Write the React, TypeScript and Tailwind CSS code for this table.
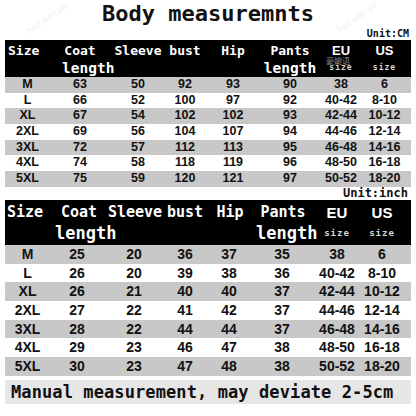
const cmRows = [
  ["M", "63", "50", "92", "93", "90", "38", "6"],
  ["L", "66", "52", "100", "97", "92", "40-42", "8-10"],
  ["XL", "67", "54", "102", "102", "93", "42-44", "10-12"],
  ["2XL", "69", "56", "104", "107", "94", "44-46", "12-14"],
  ["3XL", "72", "57", "112", "113", "95", "46-48", "14-16"],
  ["4XL", "74", "58", "118", "119", "96", "48-50", "16-18"],
  ["5XL", "75", "59", "120", "121", "97", "50-52", "18-20"],
];

const inchRows = [
  ["M", "25", "20", "36", "37", "35", "38", "6"],
  ["L", "26", "20", "39", "38", "36", "40-42", "8-10"],
  ["XL", "26", "21", "40", "40", "37", "42-44", "10-12"],
  ["2XL", "27", "22", "41", "42", "37", "44-46", "12-14"],
  ["3XL", "28", "22", "44", "44", "37", "46-48", "14-16"],
  ["4XL", "29", "23", "46", "47", "38", "48-50", "16-18"],
  ["5XL", "30", "23", "47", "48", "38", "50-52", "18-20"],
];

// faint watermarks, only where they don't sit on text
const marks = [
  { left: 24, top: 12 },
  { left: 334, top: 11 },
];

const mono = "font-['DejaVu_Sans_Mono',monospace] font-bold";
const sans = "font-['Liberation_Sans',Arial,sans-serif] font-bold";
const narrow = "font-['Liberation_Sans_Narrow','Liberation_Sans',Arial,sans-serif] font-bold";

function HeaderTop() {
  return (
    <div className="bg-black pt-[2px] text-white">
      <div className={`grid h-[17px] grid-cols-[45px_60px_56px_38px_58px_56px_46px_41px] text-[13px] leading-[17px] ${mono}`}>
        <span className="pl-[3px]">Size</span>
        <span className="text-center">Coat</span>
        <span className="text-center">Sleeve</span>
        <span className="text-center">bust</span>
        <span className="text-center">Hip</span>
        <span className="text-center">Pants</span>
        <span className={`text-center ${narrow}`}>EU</span>
        <span className={`text-center ${narrow}`}>US</span>
      </div>
      <div className="grid h-[18px] grid-cols-[45px_60px_56px_38px_58px_56px_46px_41px] leading-[18px]">
        <span />
        <span className={`pl-[12px] text-center text-[14.5px] ${mono}`}>length</span>
        <span />
        <span />
        <span />
        <span className={`text-center text-[14.5px] ${mono}`}>length</span>
        <span className={`text-center text-[8px] tracking-[1px] text-[#d8d8d8] ${mono}`}>size</span>
        <span className={`text-center text-[8px] tracking-[1px] text-[#d8d8d8] ${mono}`}>size</span>
      </div>
    </div>
  );
}

function HeaderBottom() {
  return (
    <div className="bg-black pt-[3px] text-white">
      <div className={`grid h-[19px] grid-cols-[45px_54px_60px_42px_46px_60px_50px_40px] text-[15px] leading-[19px] ${mono}`}>
        <span className="pl-[2px]">Size</span>
        <span className="pl-[4px] text-center">Coat</span>
        <span className="pl-[2px] text-center">Sleeve</span>
        <span className="text-center">bust</span>
        <span className="pl-[2px] text-center">Hip</span>
        <span className="pl-[2px] text-center">Pants</span>
        <span className={`text-center text-[15px] ${narrow}`}>EU</span>
        <span className={`text-center text-[15px] ${narrow}`}>US</span>
      </div>
      <div className="grid h-[23px] grid-cols-[45px_54px_60px_42px_46px_60px_50px_40px] leading-[23px]">
        <span />
        <span className={`whitespace-nowrap pl-[5px] text-[17px] ${mono}`}>length</span>
        <span />
        <span />
        <span />
        <span className={`pl-[4px] text-center text-[17px] ${mono}`}>length</span>
        <span className={`text-center text-[9px] tracking-[1px] text-[#d8d8d8] ${mono}`}>size</span>
        <span className={`text-center text-[9px] tracking-[1px] text-[#d8d8d8] ${mono}`}>size</span>
      </div>
    </div>
  );
}

export default function App() {
  return (
    <div className="relative h-[416px] w-[416px] overflow-hidden bg-white text-[#111]">
      <div className="px-[5px]">
        {/* Title */}
        <h1 className={`h-[28px] text-center text-[22px] leading-[28px] ${mono}`}>Body measuremnts</h1>
        <div className={`h-[12px] pr-[2px] text-right text-[10px] leading-[12px] ${mono}`}>Unit:CM</div>

        {/* cm table */}
        <HeaderTop />
        {cmRows.map((row, i) => (
          <div
            key={row[0]}
            className={`grid h-[15.7px] grid-cols-[45px_60px_56px_38px_58px_56px_46px_41px] items-center text-center text-[12.5px] leading-[15.7px] ${sans} ${i % 2 === 0 ? "bg-[#c8c8c8]" : "bg-white"}`}
          >
            {row.map((cell, j) => (
              <span key={j}>{cell}</span>
            ))}
          </div>
        ))}

        <div className={`h-[13px] pr-[3px] text-right text-[12px] leading-[13px] ${mono}`}>Unit:inch</div>

        {/* inch table */}
        <HeaderBottom />
        {inchRows.map((row, i) => (
          <div
            key={row[0]}
            className={`grid h-[18.7px] grid-cols-[45px_54px_60px_42px_46px_60px_50px_40px] items-center text-center text-[14px] leading-[18.7px] ${sans} ${i % 2 === 0 ? "bg-[#c8c8c8]" : "bg-white"}`}
          >
            {row.map((cell, j) => (
              <span key={j}>{cell}</span>
            ))}
          </div>
        ))}

        {/* footnote */}
        <div className={`mt-[4px] h-[24px] bg-[#e6e6e6] pl-[6px] text-[17px] leading-[24px] tracking-[0.1px] whitespace-nowrap ${mono}`}>
          Manual measurement, may deviate 2-5cm
        </div>
      </div>

      {/* watermarks */}
      <span className="pointer-events-none absolute left-[326px] top-[57px] font-['Noto_Sans_CJK_SC',sans-serif] text-[8px] leading-[8px] text-[#8a8a8a]">
        豪婉语
      </span>
      {marks.map((m, i) => (
        <span
          key={i}
          className="pointer-events-none absolute -rotate-[35deg] font-['Liberation_Sans',Arial,sans-serif] text-[9px] whitespace-nowrap text-black/10"
          style={{ left: m.left, top: m.top }}
        >
          hao wan yu
        </span>
      ))}
    </div>
  );
}
